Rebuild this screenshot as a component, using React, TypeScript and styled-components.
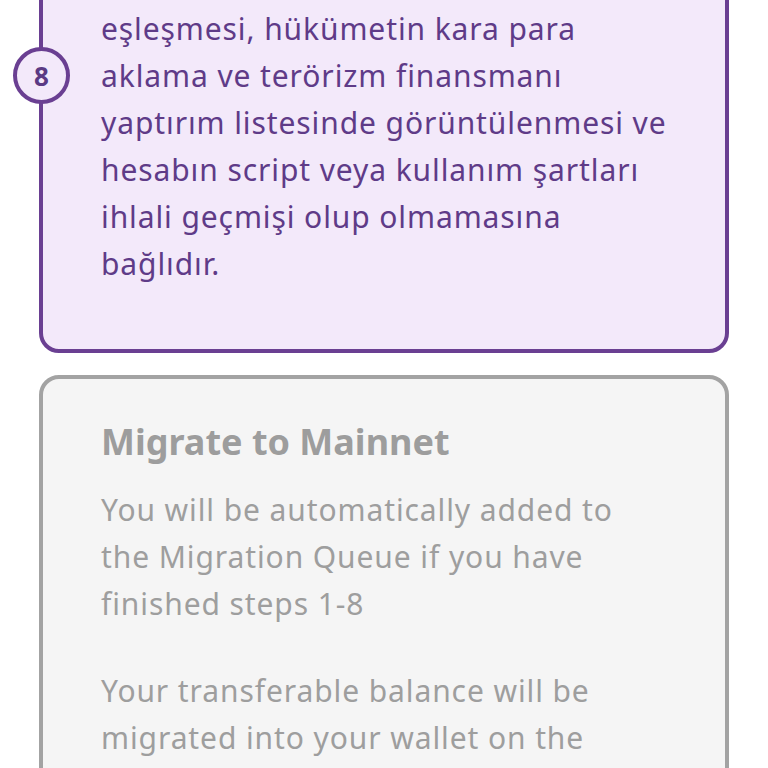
import styled, { createGlobalStyle } from "styled-components";

const GlobalStyle = createGlobalStyle`
  html, body {
    margin: 0;
    padding: 0;
    background: #ffffff;
    overflow: hidden;
  }
  body {
    font-family: "Noto Sans", "Lato", sans-serif;
  }
`;

const Page = styled.div`
  display: flex;
  flex-direction: column;
  gap: 22px;
  padding: 0 39px;
  margin-top: -133px;
`;

interface CardProps {
  active?: boolean;
}

const Card = styled.section<CardProps>`
  position: relative;
  border: 4px solid ${({ active }) => (active ? "#6a3f92" : "#a3a3a3")};
  background: ${({ active }) => (active ? "#f3e9fa" : "#f5f5f5")};
  border-radius: 20px;
  padding: 40px 30px 62px 58px;
`;

const StepBadge = styled.div`
  position: absolute;
  left: -30px;
  top: 176px;
  width: 49px;
  height: 49px;
  border: 4px solid #6a3f92;
  border-radius: 50%;
  background: #f3e9fa;
  color: #5b3a84;
  display: flex;
  align-items: center;
  justify-content: center;
  font-size: 26px;
  font-weight: 700;
`;

const Title = styled.h2`
  margin: 0 0 20px;
  font-size: 36px;
  font-weight: 700;
  color: #9d9d9d;
  line-height: 1.3;
`;

const Text = styled.p<CardProps>`
  margin: 0;
  font-size: 30px;
  line-height: 47px;
  letter-spacing: 0.9px;
  color: ${({ active }) => (active ? "#5f3b88" : "#9e9e9e")};
  white-space: nowrap;

  & + & {
    margin-top: 40px;
  }
`;

export default function App() {
  return (
    <>
      <GlobalStyle />
      <Page>
        <Card active>
          <StepBadge>8</StepBadge>
          <Text active>
            Taşınma için uygunluk KYC yüz
            <br />
            doğrulaması, isim ve doğum tarihi
            <br />
            eşleşmesi, hükümetin kara para
            <br />
            aklama ve terörizm finansmanı
            <br />
            yaptırım listesinde görüntülenmesi ve
            <br />
            hesabın script veya kullanım şartları
            <br />
            ihlali geçmişi olup olmamasına
            <br />
            bağlıdır.
          </Text>
        </Card>
        <Card>
          <Title>Migrate to Mainnet</Title>
          <Text>
            You will be automatically added to
            <br />
            the Migration Queue if you have
            <br />
            finished steps 1-8
          </Text>
          <Text>
            Your transferable balance will be
            <br />
            migrated into your wallet on the
            <br />
            Mainnet once it launches.
          </Text>
        </Card>
      </Page>
    </>
  );
}
